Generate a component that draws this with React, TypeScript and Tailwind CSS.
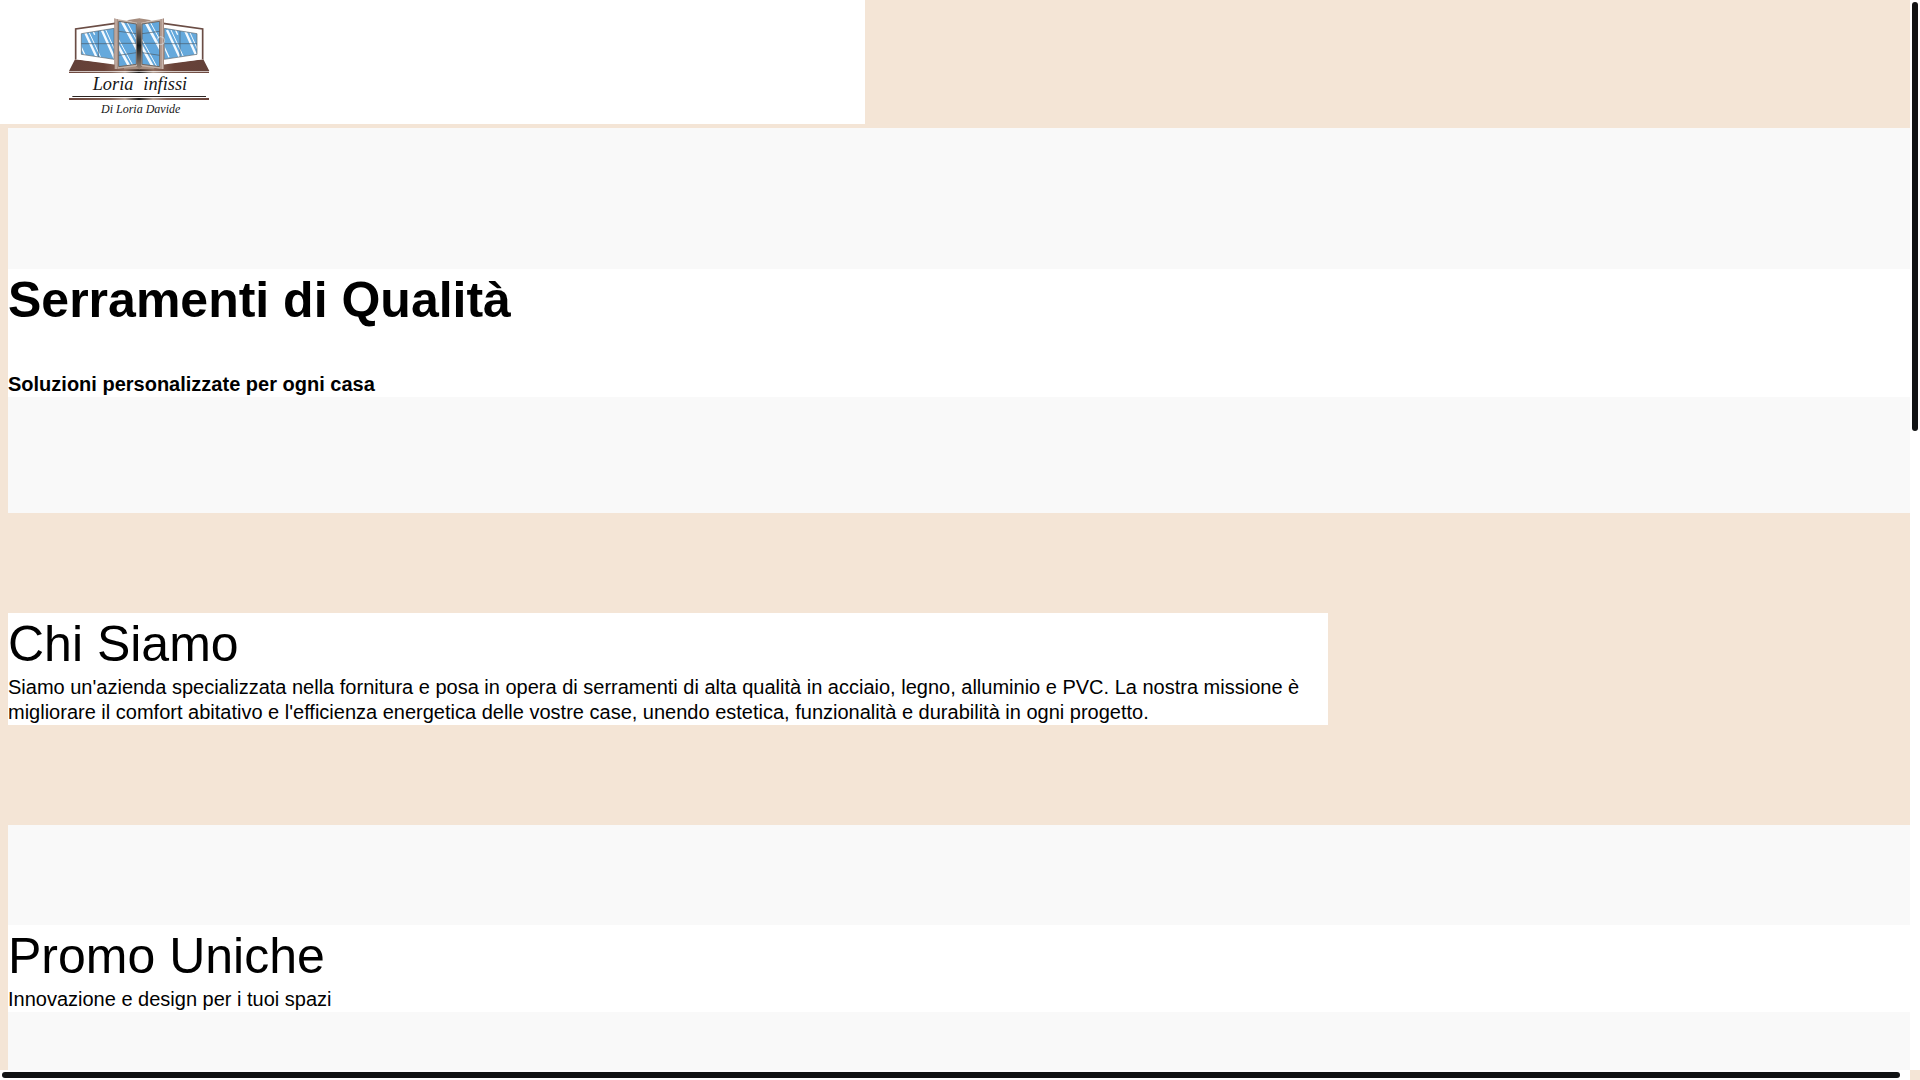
const sideGlass = "M244 101 L342 85 V178 L244 163 Z";
const doorGlass = "M356 64 L409 72 V193 L356 200 Z";

// Half of the window drawing. The right side is the same shape mirrored,
// only the reflections keep leaning the same way.
function WindowHalf({ mirrored = false }: { mirrored?: boolean }) {
  return (
    <g>
      <path d="M225 178 L348 194 L418 198 V213 H207 Z" fill="url(#sill)" />
      <path d="M227 87 L346 68 V191 L227 178 Z" fill="#fff" />
      <path d="M346 70 L227 87 V178" fill="none" stroke="#6b4d45" strokeWidth="5" />

      <path d={sideGlass} fill="#65a9dc" />
      <g clipPath="url(#sideClip)">
        <g stroke="#f4faff" transform={mirrored ? "translate(586 0) scale(-1 1)" : undefined}>
          <path d="M252 90 L292 176 M300 78 L346 180" strokeWidth="7" />
          <path d="M264 90 L304 176 M312 78 L358 180" strokeWidth="3" />
          <path d="M240 133 L258 172 M276 86 L284 104" strokeWidth="4" />
        </g>
      </g>
      <path d={sideGlass} fill="none" stroke="#5c666e" strokeWidth="2" />
      <path d="M295 93 V171 M244 131 H342" fill="none" stroke="#4a5b69" strokeWidth="2" />

      <path d="M380 61 L418 55 V72 L400 67 Z M372 202 L400 194 L418 203 V208 H372 Z" fill="#a58c7e" />
      <path d="M350 57 L416 68 V198 L350 207 Z" fill="#c3b1a6" />
      <path d={doorGlass} fill="#62a7dc" />
      <g clipPath="url(#doorClip)">
        <g stroke="#f4faff" transform={mirrored ? "translate(765 0) scale(-1 1)" : undefined}>
          <path d="M360 54 L424 172 M350 130 L394 210" strokeWidth="8" />
          <path d="M374 54 L426 150 M350 108 L406 210" strokeWidth="3" />
        </g>
      </g>
      <path d={doorGlass} fill="none" stroke="#71665f" strokeWidth="3" />
      <path d="M356 94 L409 101 M356 130 H409 M356 166 L409 158" fill="none" stroke="#4c5963" strokeWidth="2" />
      <path d="M343 55 L353 58 V207 H343 Z" fill="url(#post)" />
      <path d="M411 66 L418 64 V209 L411 200 Z" fill="url(#centre)" />
    </g>
  );
}

function Logo() {
  return (
    <svg viewBox="0 0 840 372" className="h-[124px] w-[280px]" role="img" aria-label="Loria infissi">
      <defs>
        <linearGradient id="sill">
          <stop offset="0" stopColor="#634139" />
          <stop offset="0.5" stopColor="#694238" />
          <stop offset="0.8" stopColor="#8d6b5d" />
          <stop offset="1" stopColor="#32251f" />
        </linearGradient>
        <linearGradient id="post">
          <stop offset="0" stopColor="#927468" />
          <stop offset="0.5" stopColor="#cdbbb2" />
          <stop offset="1" stopColor="#98796d" />
        </linearGradient>
        <linearGradient id="centre" x2="0" y2="1">
          <stop offset="0" stopColor="#aa9689" />
          <stop offset="0.5" stopColor="#171b1c" />
          <stop offset="1" stopColor="#9c8779" />
        </linearGradient>
        <linearGradient id="rule">
          <stop offset="0" stopColor="#6b453c" />
          <stop offset="0.3" stopColor="#806055" />
          <stop offset="0.4" stopColor="#b7a195" />
          <stop offset="0.5" stopColor="#1d1a19" />
          <stop offset="0.6" stopColor="#b7a195" />
          <stop offset="0.7" stopColor="#806055" />
          <stop offset="1" stopColor="#6b453c" />
        </linearGradient>
        <clipPath id="sideClip"><path d={sideGlass} /></clipPath>
        <clipPath id="doorClip"><path d={doorGlass} /></clipPath>
      </defs>

      <WindowHalf />
      <g transform="translate(835 0) scale(-1 1)">
        <WindowHalf mirrored />
      </g>
      <circle cx="482" cy="122" r="12" fill="none" stroke="#dcecf6" strokeWidth="3" opacity="0.6" />

      <rect x="207" y="215" width="420" height="4" fill="url(#rule)" />
      <rect x="217" y="288" width="401" height="3" fill="#2c2422" />
      <rect x="207" y="294" width="420" height="6" fill="url(#rule)" />

      <g fill="#171717" fontFamily="'Liberation Serif', serif" fontStyle="italic">
        <text x="278" y="271" fontSize="55">Loria</text>
        <text x="430" y="271" fontSize="55">infissi</text>
        <text x="303" y="339" fontSize="36">Di Loria Davide</text>
      </g>
    </svg>
  );
}

export default function App() {
  return (
    <div className="grid h-screen grid-cols-[minmax(0,1fr)_10px] grid-rows-[minmax(0,1fr)_10px] bg-[#f4e5d6] font-['Liberation_Sans',Arial,sans-serif] text-xl leading-[25px] text-black">
      <div className="overflow-hidden">
        <header className="mb-1 w-full max-w-[865px] bg-white">
          <a href="#home" className="block w-fit">
            <Logo />
          </a>
        </header>

        <main className="pl-2">
          <section id="home" className="bg-[#f9f9f9] pt-[141px] pb-[116px]">
            <div className="bg-white font-bold">
              <h1 className="mb-[41px] text-[50px] leading-[62px]">Serramenti di Qualità</h1>
              <p>Soluzioni personalizzate per ogni casa</p>
            </div>
          </section>

          <section id="chi-siamo" className="py-[100px]">
            <div className="max-w-[1320px] bg-white">
              <h2 className="text-[50px] leading-[62px]">Chi Siamo</h2>
              <p>
                Siamo un'azienda specializzata nella fornitura e posa in opera di serramenti di alta qualità in acciaio,
                legno, alluminio e PVC. La nostra missione è migliorare il comfort abitativo e l'efficienza energetica
                delle vostre case, unendo estetica, funzionalità e durabilità in ogni progetto.
              </p>
            </div>
          </section>

          <section id="promo" className="bg-[#f9f9f9] py-[100px]">
            <div className="bg-white">
              <h2 className="text-[50px] leading-[62px]">Promo Uniche</h2>
              <p>Innovazione e design per i tuoi spazi</p>
            </div>
          </section>
        </main>
      </div>

      {/* scrollbars */}
      <div className="bg-white p-0.5">
        <div className="h-[429px] rounded-full bg-[#111314]" />
      </div>
      <div className="bg-white py-0.5 pr-2.5 pl-0.5">
        <div className="h-full rounded-full bg-[#111314]" />
      </div>
    </div>
  );
}
